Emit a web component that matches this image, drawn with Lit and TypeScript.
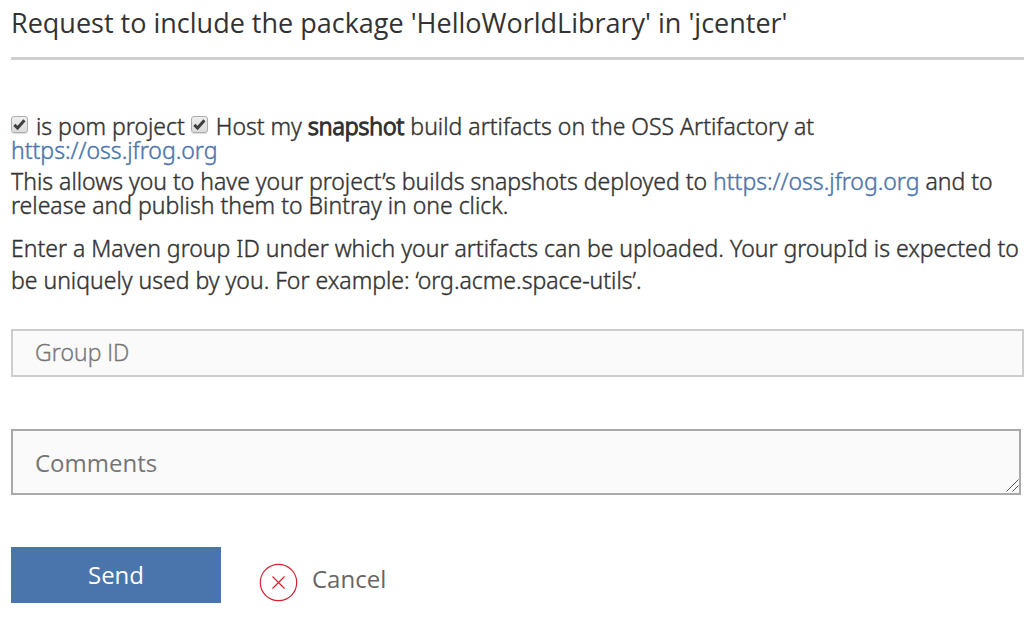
import { LitElement, html, css } from "lit";
import { customElement } from "lit/decorators.js";

@customElement("app-root")
export class AppRoot extends LitElement {
  static styles = css`
    :host {
      display: block;
      padding: 0 9px 20px 11px;
      background: #fff;
      color: #333;
      font: 300 23px/24px "Noto Sans", "Open Sans", sans-serif;
    }
    * {
      box-sizing: border-box;
    }
    .title {
      margin: 0;
      padding: 3px 0 15px;
      border-bottom: 3px solid #cfcfcf;
      font-family: "Open Sans", sans-serif;
      font-size: 27px;
      line-height: 39px;
      font-weight: 400;
    }
    form {
      padding-top: 54px;
    }
    p {
      margin: 0;
    }
    p,
    .group {
      -webkit-text-stroke: 0.4px;
    }
    a {
      color: #4a74ac;
      text-decoration: none;
    }
    strong {
      font-weight: 300;
      -webkit-text-stroke: 1.3px;
    }
    .check {
      appearance: none;
      width: 17px;
      height: 17px;
      margin: 0 2px 0 0;
      border: 1px solid #adadad;
      border-radius: 3px;
      background: linear-gradient(#eee, #dcdcdc);
      box-shadow: 0 1px 1px #ddd;
      vertical-align: 2px;
    }
    .check:checked {
      background:
        url("data:image/svg+xml,%3Csvg xmlns='http://www.w3.org/2000/svg' viewBox='0 0 14 14'%3E%3Cpath d='M2.2 7.3l3 3L11.6 3' fill='none' stroke='%23404040' stroke-width='2.8'/%3E%3C/svg%3E")
          center / 15px 15px no-repeat,
        linear-gradient(#eee, #dcdcdc);
    }
    .about {
      margin-top: 7px;
    }
    .hint {
      margin-top: 15px;
      line-height: 32px;
    }
    .field {
      display: block;
      width: 100%;
      border: 2px solid #cdcdcd;
      border-radius: 0;
      background: #fafafa;
      color: #333;
      font: inherit;
      outline: none;
    }
    .field::placeholder {
      color: #757575;
      opacity: 1;
    }
    .group {
      height: 48px;
      margin-top: 33px;
      padding: 0 22px 2px;
      font-family: "Open Sans", sans-serif;
    }
    .comments {
      width: calc(100% - 3px);
      height: 66px;
      padding: 16px 22px;
      border-color: #a9a9a9;
      font-family: "Open Sans", sans-serif;
      font-size: 24px;
      font-weight: 400;
      line-height: 32px;
      overflow: hidden;
      resize: none;
    }
    .comments-box {
      display: grid;
      margin-top: 52px;
    }
    .comments-box > * {
      grid-area: 1 / 1;
    }
    .grip {
      z-index: 1;
      place-self: end;
      margin: 0 5px 3px 0;
      pointer-events: none;
    }
    .actions {
      display: flex;
      gap: 38px;
      margin-top: 52px;
    }
    button {
      border: 0;
      padding: 0;
      font: 400 24px/32px "Open Sans", sans-serif;
      cursor: pointer;
    }
    .send {
      width: 210px;
      height: 56px;
      background: #4a74ac;
      color: #fff;
    }
    .cancel {
      display: flex;
      gap: 14px;
      padding-top: 16px;
      background: none;
      color: #666;
    }
  `;

  render() {
    return html`
      <h1 class="title">Request to include the package 'HelloWorldLibrary' in 'jcenter'</h1>
      <form @submit=${(e: Event) => e.preventDefault()}>
        <p>
          <input class="check" id="pom" type="checkbox" checked />
          <label for="pom">is pom project</label>
          <input class="check" id="host" type="checkbox" checked />
          <label for="host">Host my <strong>snapshot</strong> build artifacts on the OSS Artifactory at</label>
          <a href="https://oss.jfrog.org">https://oss.jfrog.org</a>
        </p>
        <p class="about">
          This allows you to have your project’s builds snapshots deployed to
          <a href="https://oss.jfrog.org">https://oss.jfrog.org</a> and to release and publish them to
          Bintray in one click.
        </p>
        <p class="hint">
          Enter a Maven group ID under which your artifacts can be uploaded. Your groupId is expected to
          be uniquely used by you. For example: ‘org.acme.space-utils’.
        </p>
        <input class="field group" type="text" placeholder="Group ID" aria-label="Group ID" />
        <div class="comments-box">
          <textarea class="field comments" placeholder="Comments" aria-label="Comments"></textarea>
          <svg class="grip" width="13" height="13" viewBox="0 0 13 13" stroke="#555" aria-hidden="true">
            <path d="M0.5 12.5l12-12M6.5 12.5l6-6" />
          </svg>
        </div>
        <div class="actions">
          <button class="send" type="submit">Send</button>
          <button class="cancel" type="button">
            <svg width="39" height="39" viewBox="0 0 39 39" fill="none" stroke="#d9222f" aria-hidden="true">
              <circle cx="19.5" cy="19.5" r="18.2" stroke-width="1.2" />
              <path d="M13.5 13.5l12 12M25.5 13.5l-12 12" stroke-width="1.2" />
            </svg>
            <span>Cancel</span>
          </button>
        </div>
      </form>
    `;
  }
}
